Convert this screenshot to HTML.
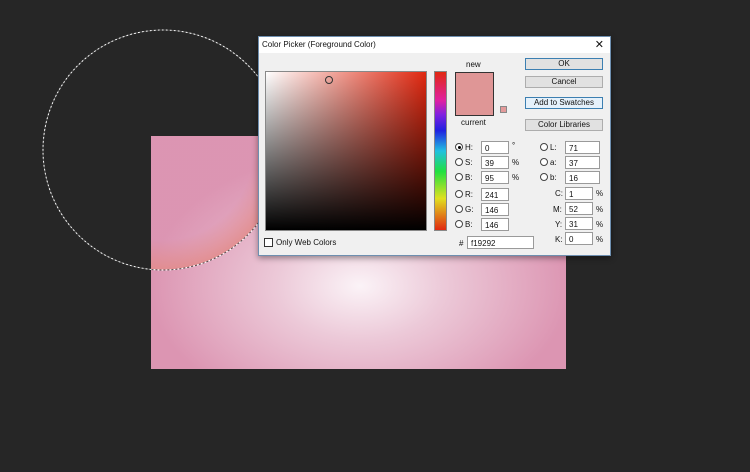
<!DOCTYPE html>
<html><head><style>
*{margin:0;padding:0;box-sizing:border-box}
body{width:750px;height:472px;background:#262626;position:relative;overflow:hidden;font-family:"Liberation Sans",sans-serif;font-size:8px;color:#111}
.a{position:absolute}
.pink{left:151px;top:136px;width:415px;height:233px;background:radial-gradient(ellipse 210px 135px at 209px 150px,#fbf3f7 0%,#ecc9d8 40%,#dc95b2 100%);}
.inp{position:absolute;background:#fff;border:1px solid #9a9a9a;height:13px;font-size:8px;padding:2px 0 0 3px}
.rad{position:absolute;width:8px;height:8px;border:1px solid #444;border-radius:50%;background:#fff}
.lbl{position:absolute;font-size:8px}
.btn{position:absolute;left:525px;width:78px;height:12px;background:#e1e1e1;border:1px solid #adadad;text-align:center;font-size:8px;line-height:10px}
</style></head><body>
<div class="a pink"></div>
<div class="a" style="left:151px;top:136px;width:132px;height:134px;background:radial-gradient(circle 120px at 12px 14px,rgba(220,150,180,.3) 75%,rgba(226,140,140,.9) 100%);clip-path:circle(120px at 12px 14px)"></div>
<svg class="a" style="left:0;top:0" width="750" height="472"><circle cx="163" cy="150" r="120" fill="none" stroke="#fff" stroke-width="1" stroke-dasharray="2 2"/><circle cx="163" cy="150" r="120" fill="none" stroke="#555" stroke-width="1" stroke-dasharray="2 2" stroke-dashoffset="2"/></svg>
<div class="a" style="left:258px;top:36px;width:353px;height:220px;background:#f0f0f0;border:1px solid #6e8fb0;box-shadow:0 2px 6px rgba(0,0,0,.4)">
<div class="a" style="left:0;top:0;width:351px;height:16px;background:#fff;font-size:8px;padding:3px 0 0 3px">Color Picker (Foreground Color)<span class="a" style="right:6px;top:1px;font-size:11px">✕</span></div>
</div>
<div class="a" style="left:265px;top:71px;width:162px;height:160px;background:linear-gradient(to bottom,rgba(0,0,0,0),#000),linear-gradient(to right,#fff,#e02810);border:1px solid #888"></div>
<div class="a" style="left:325px;top:76px;width:8px;height:8px;border:1px solid #333;border-radius:50%"></div>
<div class="a" style="left:434px;top:71px;width:13px;height:160px;background:linear-gradient(to bottom,#e02810,#e020a0 18%,#8020e0 27%,#2020e0 37%,#20c0e0 50%,#20e040 63%,#e0e020 80%,#e02810);border:1px solid #888"></div>
<div class="a" style="left:264px;top:238px;width:9px;height:9px;border:1px solid #333;background:#fff"></div>
<div class="lbl" style="left:276px;top:238px">Only Web Colors</div>
<div class="lbl" style="left:466px;top:60px">new</div>
<div class="a" style="left:455px;top:72px;width:39px;height:44px;background:#df9696;border:1px solid #333"></div>
<div class="lbl" style="left:461px;top:118px">current</div>
<div class="a" style="left:500px;top:106px;width:7px;height:7px;background:#e39a9a;border:1px solid #888"></div>
<div class="btn" style="top:58px;border-color:#3c7fb1">OK</div>
<div class="btn" style="top:76px">Cancel</div>
<div class="btn" style="top:97px;border-color:#3c7fb1;background:#e5f1fb">Add to Swatches</div>
<div class="btn" style="top:119px">Color Libraries</div>
<div class="rad" style="left:455px;top:143px"><div class="a" style="left:2px;top:2px;width:3px;height:3px;background:#000;border-radius:50%"></div></div>
<div class="rad" style="left:455px;top:158px"></div><div class="rad" style="left:455px;top:173px"></div>
<div class="rad" style="left:455px;top:190px"></div><div class="rad" style="left:455px;top:205px"></div><div class="rad" style="left:455px;top:220px"></div>
<div class="lbl" style="left:465px;top:143px">H:</div><div class="lbl" style="left:465px;top:158px">S:</div><div class="lbl" style="left:465px;top:173px">B:</div>
<div class="lbl" style="left:465px;top:190px">R:</div><div class="lbl" style="left:465px;top:205px">G:</div><div class="lbl" style="left:465px;top:220px">B:</div>
<div class="inp" style="left:481px;top:141px;width:28px">0</div><div class="inp" style="left:481px;top:156px;width:28px">39</div><div class="inp" style="left:481px;top:171px;width:28px">95</div>
<div class="inp" style="left:481px;top:188px;width:28px">241</div><div class="inp" style="left:481px;top:203px;width:28px">146</div><div class="inp" style="left:481px;top:218px;width:28px">146</div>
<div class="lbl" style="left:512px;top:141px">°</div><div class="lbl" style="left:512px;top:158px">%</div><div class="lbl" style="left:512px;top:173px">%</div>
<div class="rad" style="left:540px;top:143px"></div><div class="rad" style="left:540px;top:158px"></div><div class="rad" style="left:540px;top:173px"></div>
<div class="lbl" style="left:550px;top:143px">L:</div><div class="lbl" style="left:550px;top:158px">a:</div><div class="lbl" style="left:550px;top:173px">b:</div>
<div class="inp" style="left:565px;top:141px;width:35px">71</div><div class="inp" style="left:565px;top:156px;width:35px">37</div><div class="inp" style="left:565px;top:171px;width:35px">16</div>
<div class="lbl" style="left:555px;top:189px">C:</div><div class="lbl" style="left:553px;top:205px">M:</div><div class="lbl" style="left:555px;top:220px">Y:</div><div class="lbl" style="left:555px;top:235px">K:</div>
<div class="inp" style="left:565px;top:187px;width:28px">1</div><div class="inp" style="left:565px;top:202px;width:28px">52</div><div class="inp" style="left:565px;top:217px;width:28px">31</div><div class="inp" style="left:565px;top:232px;width:28px">0</div>
<div class="lbl" style="left:596px;top:189px">%</div><div class="lbl" style="left:596px;top:205px">%</div><div class="lbl" style="left:596px;top:220px">%</div><div class="lbl" style="left:596px;top:235px">%</div>
<div class="lbl" style="left:459px;top:239px">#</div>
<div class="inp" style="left:467px;top:236px;width:67px">f19292</div>
</body></html>
